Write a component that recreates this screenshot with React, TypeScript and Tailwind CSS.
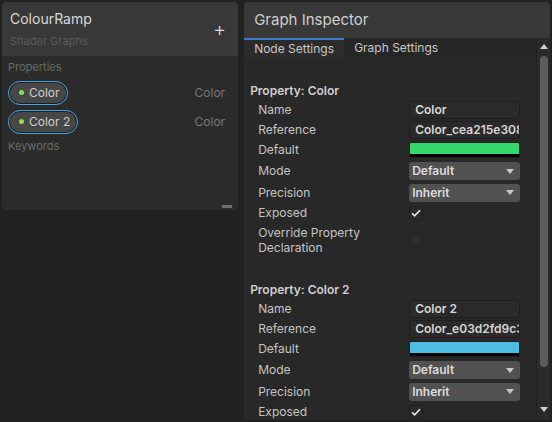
const font = "font-['Inter','Noto_Sans',sans-serif]";

function Pill({ label }: { label: string }) {
  return (
    <div className="flex h-[24px] items-center rounded-full border border-[#3aa6e6] bg-[#474747] pr-[7px] pl-[10px] shadow-[inset_0_0_0_1px_#1d1d1d]">
      <span className="mr-[5px] h-[5px] w-[5px] rounded-full bg-[#8fe04c]" />
      <span className="text-[12px] text-[#d0d0d0]">{label}</span>
    </div>
  );
}

function Row({ label, h = "h-[20px]", children }: { label: string; h?: string; children?: React.ReactNode }) {
  return (
    <div className={`flex items-center ${h}`}>
      <span className="w-[159px] pl-[8px] text-[12px] text-[#c4c4c4]">{label}</span>
      <div className="w-[111px]">{children}</div>
    </div>
  );
}

function TextField({ value }: { value: string }) {
  return (
    <div className="flex h-[18px] items-center overflow-hidden rounded-[3px] border border-[#1e1e1e] bg-[#2a2a2a] px-[5px] text-[12px] font-semibold whitespace-nowrap text-[#d6d6d6]">
      {value}
    </div>
  );
}

function Dropdown({ value }: { value: string }) {
  return (
    <div className="flex h-[18px] items-center justify-between rounded-[3px] bg-[#515151] pr-[6px] pl-[3px] text-[12px] font-semibold text-[#dcdcdc]">
      {value}
      <svg width="8" height="5" viewBox="0 0 8 5">
        <path d="M0 0h8L4 5z" fill="#c8c8c8" />
      </svg>
    </div>
  );
}

function Swatch({ color }: { color: string }) {
  return (
    <div className="flex h-[16px] flex-col overflow-hidden rounded-[2px] border border-[#1e1e1e]">
      <div className={`h-[11px] ${color}`} />
      <div className="h-[3px] bg-black" />
    </div>
  );
}

function Check({ checked }: { checked: boolean }) {
  return (
    <div className="flex h-[14px] w-[14px] items-center justify-center rounded-[2px] border border-[#1f1f1f] bg-[#2a2a2a]">
      {checked && (
        <svg width="10" height="8" viewBox="0 0 10 8">
          <path d="M1 4.2l2.6 2.6L9 1.2" stroke="#e6e6e6" strokeWidth="1.6" fill="none" />
        </svg>
      )}
    </div>
  );
}

function PropertyBlock({
  name,
  reference,
  swatch,
  withOverride,
}: {
  name: string;
  reference: string;
  swatch: string;
  withOverride?: boolean;
}) {
  return (
    <div className="flex flex-col">
      <div className="mb-[1px] flex h-[16px] items-center text-[12px] font-semibold text-[#cfcfcf]">
        Property: {name}
      </div>
      <Row label="Name">
        <TextField value={name} />
      </Row>
      <Row label="Reference">
        <TextField value={reference} />
      </Row>
      <Row label="Default">
        <Swatch color={swatch} />
      </Row>
      <Row label="Mode" h="h-[22px]">
        <Dropdown value="Default" />
      </Row>
      <Row label="Precision" h="h-[21px]">
        <Dropdown value="Inherit" />
      </Row>
      <Row label="Exposed">
        <Check checked />
      </Row>
      {withOverride && (
        <div className="flex h-[33px] items-center">
          <span className="w-[159px] pl-[8px] text-[12px] leading-[15px] text-[#c4c4c4]">
            Override Property
            <br />
            Declaration
          </span>
          <Check checked={false} />
        </div>
      )}
    </div>
  );
}

export default function App() {
  return (
    <div className={`flex h-[422px] w-[552px] gap-[6px] bg-[#212121] p-[2px] ${font}`}>
      <div className="flex h-[208px] w-[237px] flex-col overflow-hidden rounded-[4px] bg-[#2b2b2b]">
        <div className="flex h-[54px] items-center justify-between bg-[#383838] pr-[12px] pl-[8px]">
          <div className="flex flex-col">
            <span className="text-[14px] text-[#d8d8d8]">ColourRamp</span>
            <span className="mt-[4px] text-[11px] text-[#5c5c5c]">Shader Graphs</span>
          </div>
          <span className="text-[20px] leading-none font-light text-[#d8d8d8]">+</span>
        </div>
        <div className="flex flex-1 flex-col px-[6px] pt-[3px]">
          <span className="text-[11px] text-[#6a6a6a]">Properties</span>
          <div className="mt-[5px] flex items-center justify-between pr-[7px]">
            <Pill label="Color" />
            <span className="text-[12px] text-[#777]">Color</span>
          </div>
          <div className="mt-[5px] flex items-center justify-between pr-[7px]">
            <Pill label="Color 2" />
            <span className="text-[12px] text-[#777]">Color</span>
          </div>
          <span className="mt-[4px] text-[11px] text-[#6a6a6a]">Keywords</span>
          <div className="mt-auto mb-[2px] self-end">
            <div className="h-[3px] w-[10px] bg-[#6e6e6e]" />
          </div>
        </div>
      </div>

      <div className="flex h-[418px] w-[307px] flex-col overflow-hidden rounded-t-[4px] bg-[#282828]">
        <div className="flex h-[36px] items-center bg-[#383838] pl-[10px] text-[15px] text-[#cfcfcf]">
          Graph Inspector
        </div>
        <div className="flex min-h-0 flex-1">
          <div className="flex flex-1 flex-col">
            <div className="flex h-[20px] bg-[#262626] text-[12px] text-[#c8c8c8]">
              <div className="flex w-[100px] items-center border-t-2 border-[#3a7bc8] bg-[#2c2c2c] pl-[10px]">
                Node Settings
              </div>
              <div className="flex items-center pl-[10px]">Graph Settings</div>
            </div>
            <div className="flex flex-col gap-[26px] pt-[25px] pl-[6px]">
              <PropertyBlock
                name="Color"
                reference="Color_cea215e308"
                swatch="bg-[#36d66f]"
                withOverride
              />
              <PropertyBlock name="Color 2" reference="Color_e03d2fd9c3" swatch="bg-[#4dbde4]" />
            </div>
          </div>
          <div className="flex w-[14px] flex-col items-center border-l border-[#222] bg-[#2a2a2a] py-[4px]">
            <svg width="8" height="5" viewBox="0 0 8 5" className="mt-[2px]">
              <path d="M4 0l4 5H0z" fill="#d0d0d0" />
            </svg>
            <div className="mt-[7px] h-[311px] w-[8px] rounded-full bg-[#5c5c5c]" />
            <svg width="8" height="5" viewBox="0 0 8 5" className="mt-auto mb-[4px]">
              <path d="M0 0h8L4 5z" fill="#d0d0d0" />
            </svg>
          </div>
        </div>
      </div>
    </div>
  );
}
